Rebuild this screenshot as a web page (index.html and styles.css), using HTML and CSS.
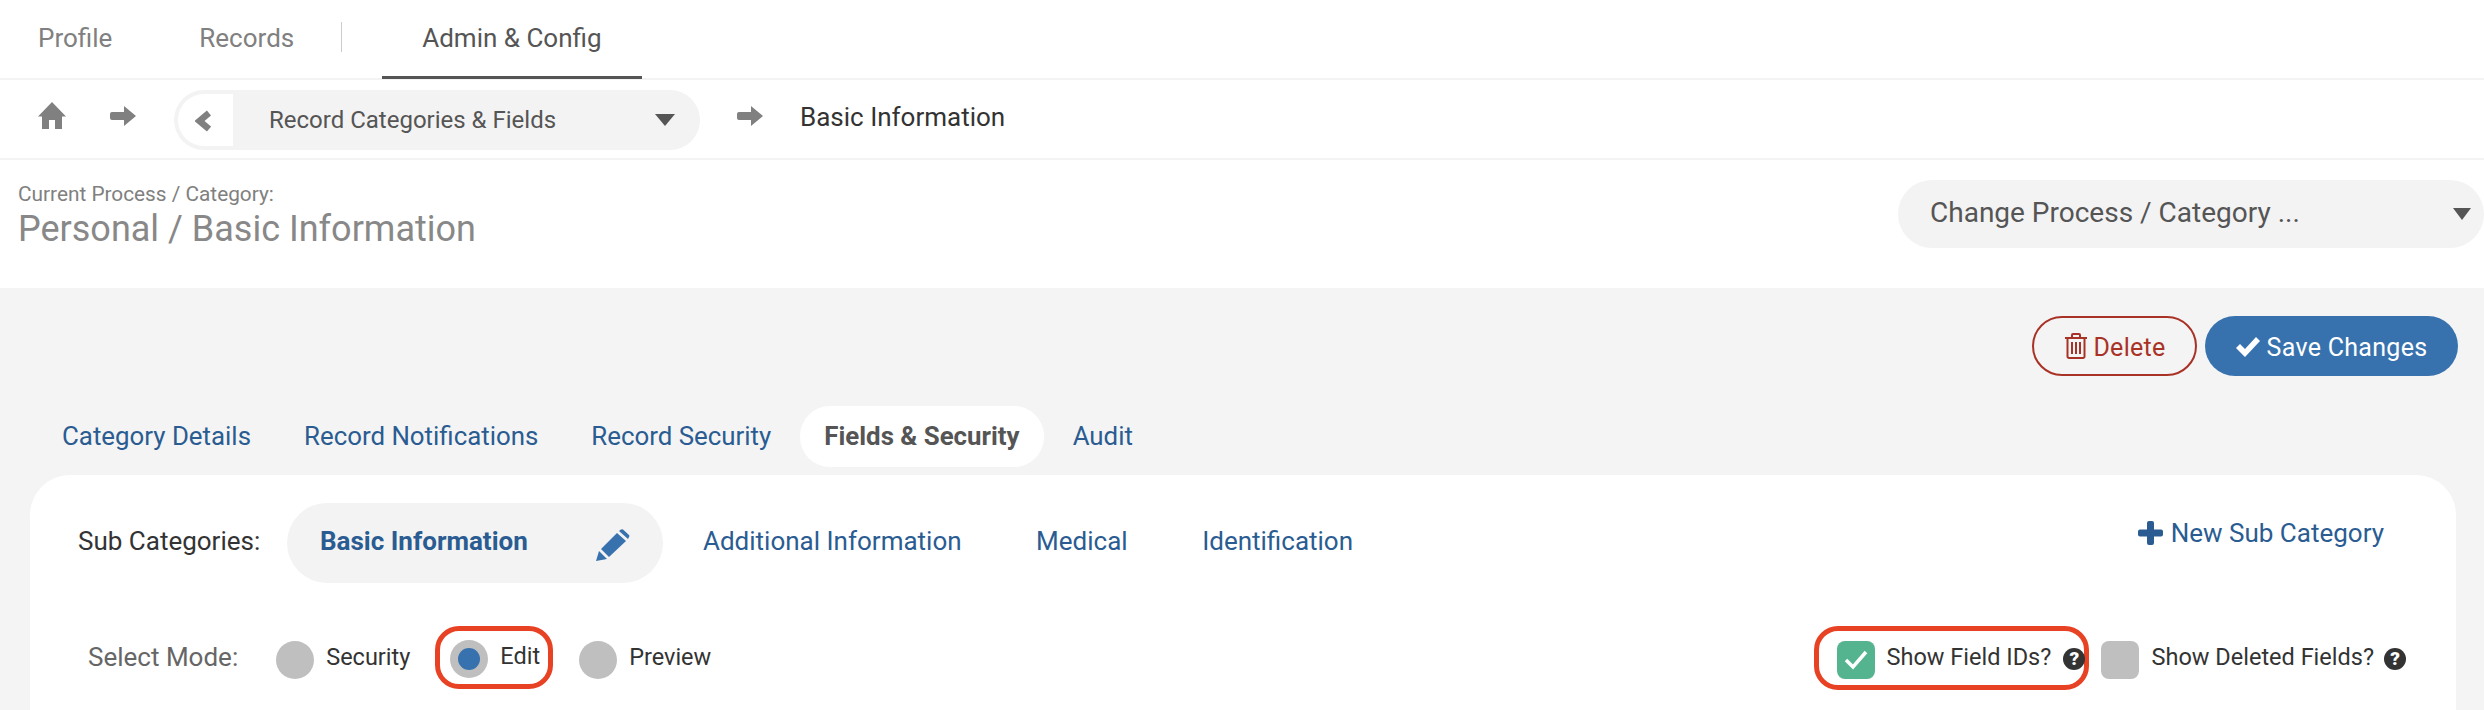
FILE: index.html
```html
<!DOCTYPE html>
<html lang="en">
<head>
<meta charset="utf-8">
<title>Admin &amp; Config</title>
<link rel="stylesheet" href="styles.css">
</head>
<body>
<nav class="topnav">
  <a class="topnav-item">Profile</a>
  <a class="topnav-item topnav-records">Records</a>
  <span class="topnav-sep"></span>
  <a class="topnav-item topnav-active">Admin &amp; Config</a>
</nav>
<div class="crumbs">
  <svg class="icon-home" viewBox="0 0 28 28"><path d="M14 0 28 14.500H24V27H17V18H11V27H4V14.500H0Z"/></svg>
  <svg class="icon-arrow" viewBox="0 0 26 20"><path d="M14 0 26 10 14 20V14H2a2 2 0 0 1-2-2V8a2 2 0 0 1 2-2H14Z"/></svg>
  <div class="crumb-select">
    <span class="crumb-back"><svg class="icon-chevron" viewBox="0 0 16 22"><path fill="none" stroke="#808080" stroke-width="6.500" d="M14 3 4.500 11 14 19"/></svg></span>
    <span class="crumb-select-text">Record Categories &amp; Fields</span>
    <span class="caret"></span>
  </div>
  <svg class="icon-arrow icon-arrow-2" viewBox="0 0 26 20"><path d="M14 0 26 10 14 20V14H2a2 2 0 0 1-2-2V8a2 2 0 0 1 2-2H14Z"/></svg>
  <span class="crumb-current">Basic Information</span>
</div>
<header class="head">
  <div class="head-title">
    <div class="head-label">Current Process / Category:</div>
    <div class="head-name">Personal / Basic Information</div>
  </div>
  <div class="change-select">
    <span class="change-text">Change Process / Category ...</span>
    <span class="caret caret-large"></span>
  </div>
</header>
<main class="main">
  <div class="actions">
    <button class="btn btn-delete">
      <svg class="icon-trash" viewBox="0 0 22 26"><path fill="none" stroke="currentColor" stroke-width="2" d="M0 5H22M7 5V2a1 1 0 0 1 1-1h6a1 1 0 0 1 1 1v3M2.500 5V23.500a1.500 1.500 0 0 0 1.500 1.500H18a1.500 1.500 0 0 0 1.500-1.500V5M7 9V21M11 9V21M15 9V21"/></svg>
      Delete
    </button>
    <button class="btn btn-save">
      <svg class="icon-check" viewBox="0 0 24 20"><path d="M9 20 0 11 4 7 9 12 20 0 24 4Z"/></svg>
      Save Changes
    </button>
  </div>
  <div class="tabs">
    <a class="tab">Category Details</a>
    <a class="tab">Record Notifications</a>
    <a class="tab">Record Security</a>
    <a class="tab tab-active">Fields &amp; Security</a>
    <a class="tab">Audit</a>
  </div>
  <section class="card">
    <div class="sub-row">
      <span class="sub-label">Sub Categories:</span>
      <div class="sub-pill">
        <span class="sub-pill-text">Basic Information</span>
        <svg class="icon-pencil" viewBox="0 0 34 32"><path d="M0 32 3 22 11 30ZM5 20 21 4 30 12 13 28ZM23 2 25 0.500Q26 0 27 0.500L33 6Q34 7 33 8L32 10Z"/></svg>
      </div>
      <a class="sub-link sub-link-1">Additional Information</a>
      <a class="sub-link">Medical</a>
      <a class="sub-link">Identification</a>
      <a class="sub-new">
        <svg class="icon-plus" viewBox="0 0 25 24"><path d="M9 2a2 2 0 0 1 2-2h3a2 2 0 0 1 2 2V8.500h7a2 2 0 0 1 2 2v3a2 2 0 0 1-2 2H16V22a2 2 0 0 1-2 2H11a2 2 0 0 1-2-2V15.500H2a2 2 0 0 1-2-2v-3a2 2 0 0 1 2-2H9Z"/></svg>
        New Sub Category
      </a>
    </div>
    <div class="mode-row">
      <span class="mode-label">Select Mode:</span>
      <label class="radio-item"><span class="radio"></span><span class="opt-text">Security</span></label>
      <label class="radio-item highlight highlight-edit"><span class="radio radio-on"></span><span class="opt-text">Edit</span></label>
      <label class="radio-item radio-preview"><span class="radio"></span><span class="opt-text">Preview</span></label>
      <div class="show-opts">
        <label class="check-item highlight highlight-ids">
          <span class="check check-on"><svg class="icon-tick" viewBox="0 0 24 20"><path fill="none" stroke="#fff" stroke-width="3.500" d="M2 10 9 17 22 2"/></svg></span>
          <span class="opt-text">Show Field IDs?</span>
          <span class="help">?</span>
        </label>
        <label class="check-item check-deleted">
          <span class="check"></span>
          <span class="opt-text">Show Deleted Fields?</span>
          <span class="help">?</span>
        </label>
      </div>
    </div>
  </section>
</main>
</body>
</html>
```
FILE: styles.css
```css
* { box-sizing: border-box; }
html, body { margin: 0; height: 710px; overflow: hidden; }
body { font-family: Roboto, "Liberation Sans", sans-serif; color: #333; background: #fff; }

.topnav { display: flex; align-items: center; height: 80px; padding-left: 38px; border-bottom: 2px solid #f3f3f3; }
.topnav-item { font-size: 26px; color: #808080; line-height: 78px; height: 80px; }
.topnav-records { margin-left: 87px; }
.topnav-sep { width: 1px; height: 30px; background: #ccc; margin: -4px 0 0 47px; }
.topnav-active { margin-left: 40px; padding: 0 40px; color: #555; border-bottom: 3px solid #555; }

.crumbs { display: flex; align-items: center; height: 80px; padding: 0 0 2px 38px; border-bottom: 2px solid #f3f3f3; }
.icon-home { width: 28px; height: 28px; margin-top: -4px; fill: #808080; }
.icon-arrow { width: 26px; height: 20px; margin: -4px 0 0 44px; fill: #808080; }
.crumb-select { display: flex; align-items: center; width: 526px; height: 60px; margin: 4px 0 0 38px; border-radius: 30px; background: #f3f3f3; padding: 4px 25px 4px 4px; }
.crumb-back { display: flex; align-items: center; justify-content: center; width: 55px; height: 52px; background: #fff; border-radius: 26px 0 0 26px; }
.icon-chevron { width: 16px; height: 22px; margin: 2px 0 0 -5px; }
.crumb-select-text { flex: 1; font-size: 24px; color: #555; margin-left: 36px; }
.caret { width: 0; height: 0; border-style: solid; border-width: 12px 10px 0; border-color: #555 transparent transparent; }
.icon-arrow-2 { margin-left: 37px; }
.crumb-current { font-size: 26px; color: #333; margin: -2px 0 0 37px; }

.head { display: flex; justify-content: space-between; height: 128px; padding: 21px 0 0 18px; }
.head-label { font-size: 20.800px; line-height: 26px; color: #808080; }
.head-name { font-size: 36px; line-height: 42px; color: #888; margin-top: 1px; }
.change-select { display: flex; align-items: center; justify-content: space-between; width: 586px; height: 68px; margin-top: -1px; padding: 0 13px 0 32px; border-radius: 34px; background: #f3f3f3; font-size: 28px; color: #555; }
.change-text { margin-top: -3px; }
.caret-large { border-width: 12px 9px 0; }

.main { background: #f4f4f4; height: 422px; padding-top: 28px; }
.actions { display: flex; justify-content: flex-end; gap: 8px; padding-right: 26px; }
.btn { display: flex; align-items: center; justify-content: center; height: 60px; border-radius: 30px; font: 400 25px Roboto, sans-serif; letter-spacing: .3px; padding-top: 3px; }
.btn-delete { width: 165px; padding-left: 8px; padding-top: 4px; background: transparent; border: 2px solid #a93226; color: #a93226; gap: 6px; }
.btn-save { width: 253px; background: #3872ae; border: 0; color: #fff; gap: 7px; }
.icon-trash { width: 22px; height: 26px; margin-top: -3px; }
.icon-check { width: 24px; height: 20px; fill: #fff; }

.tabs { display: flex; gap: 5px; margin-top: 30px; padding-left: 38px; }
.tab { height: 61px; line-height: 61px; padding: 0 24px; border-radius: 30px; font-size: 25.850px; color: #2a5c92; }
.tab-active { background: #fff; color: #555; font-weight: 700; }

.card { height: 235px; margin: 8px 28px 0 30px; border-radius: 40px 40px 0 0; background: #fff; padding-top: 28px; }
.sub-row { display: flex; align-items: center; height: 80px; padding-left: 48px; }
.sub-label { font-size: 26px; color: #333; width: 209px; margin-top: -5px; }
.sub-pill { display: flex; align-items: center; justify-content: space-between; width: 376px; height: 80px; padding: 0 33px 0 33px; border-radius: 40px; background: #f3f3f3; }
.sub-pill-text { font-size: 26px; font-weight: 700; color: #2a5c92; margin-top: -5px; }
.icon-pencil { width: 34px; height: 32px; fill: #3872ae; margin-top: 3px; }
.sub-link { font-size: 26px; color: #2a5c92; margin: -5px 0 0 74.500px; }
.sub-link-1 { margin-left: 40px; }
.sub-new { display: flex; align-items: center; gap: 8px; margin-left: auto; margin-right: 72px; margin-top: -21px; font-size: 26px; color: #2a5c92; }
.icon-plus { width: 25px; height: 24px; fill: #2a5c92; }

.mode-row { display: flex; align-items: center; height: 64px; margin-top: 43px; padding-left: 58px; }
.mode-label { font-size: 26px; color: #666; margin: -3px 38px 0 0; }
.radio-item { display: flex; align-items: center; gap: 12px; }
.radio { width: 38px; height: 38px; border-radius: 50%; background: #bfbfbf; margin-top: 3px; }
.radio-on { display: flex; align-items: center; justify-content: center; }
.radio-on::after { content: ""; width: 22px; height: 22px; border-radius: 50%; background: #3872ae; }
.opt-text { font-size: 23.500px; color: #333; margin-top: -3px; white-space: nowrap; flex: none; }
.highlight { border: 5px solid #e84224; }
.highlight-edit { height: 63px; margin: -1px 26px 0 25px; padding: 0 8px 0 10px; border-radius: 24px; }
.show-opts { display: flex; align-items: center; gap: 12px; margin-left: auto; margin-right: 50px; }
.check-item { display: flex; align-items: center; }
.highlight-ids { height: 64px; width: 275px; padding-left: 18px; border-radius: 24px; }
.highlight-ids .check { margin-right: 12px; }
.highlight-ids .help { margin-left: 12px; }
.check { display: flex; align-items: center; justify-content: center; flex: none; width: 38px; height: 38px; border-radius: 8px; background: #bfbfbf; margin: 3px 13px 0 0; }
.check-on { background: #55b490; }
.icon-tick { width: 24px; height: 20px; }
.help { display: flex; align-items: center; justify-content: center; flex: none; width: 22px; height: 22px; margin: 1px 0 0 10px; border-radius: 50%; background: #333; color: #fff; font-size: 19px; font-weight: 900; }
```
